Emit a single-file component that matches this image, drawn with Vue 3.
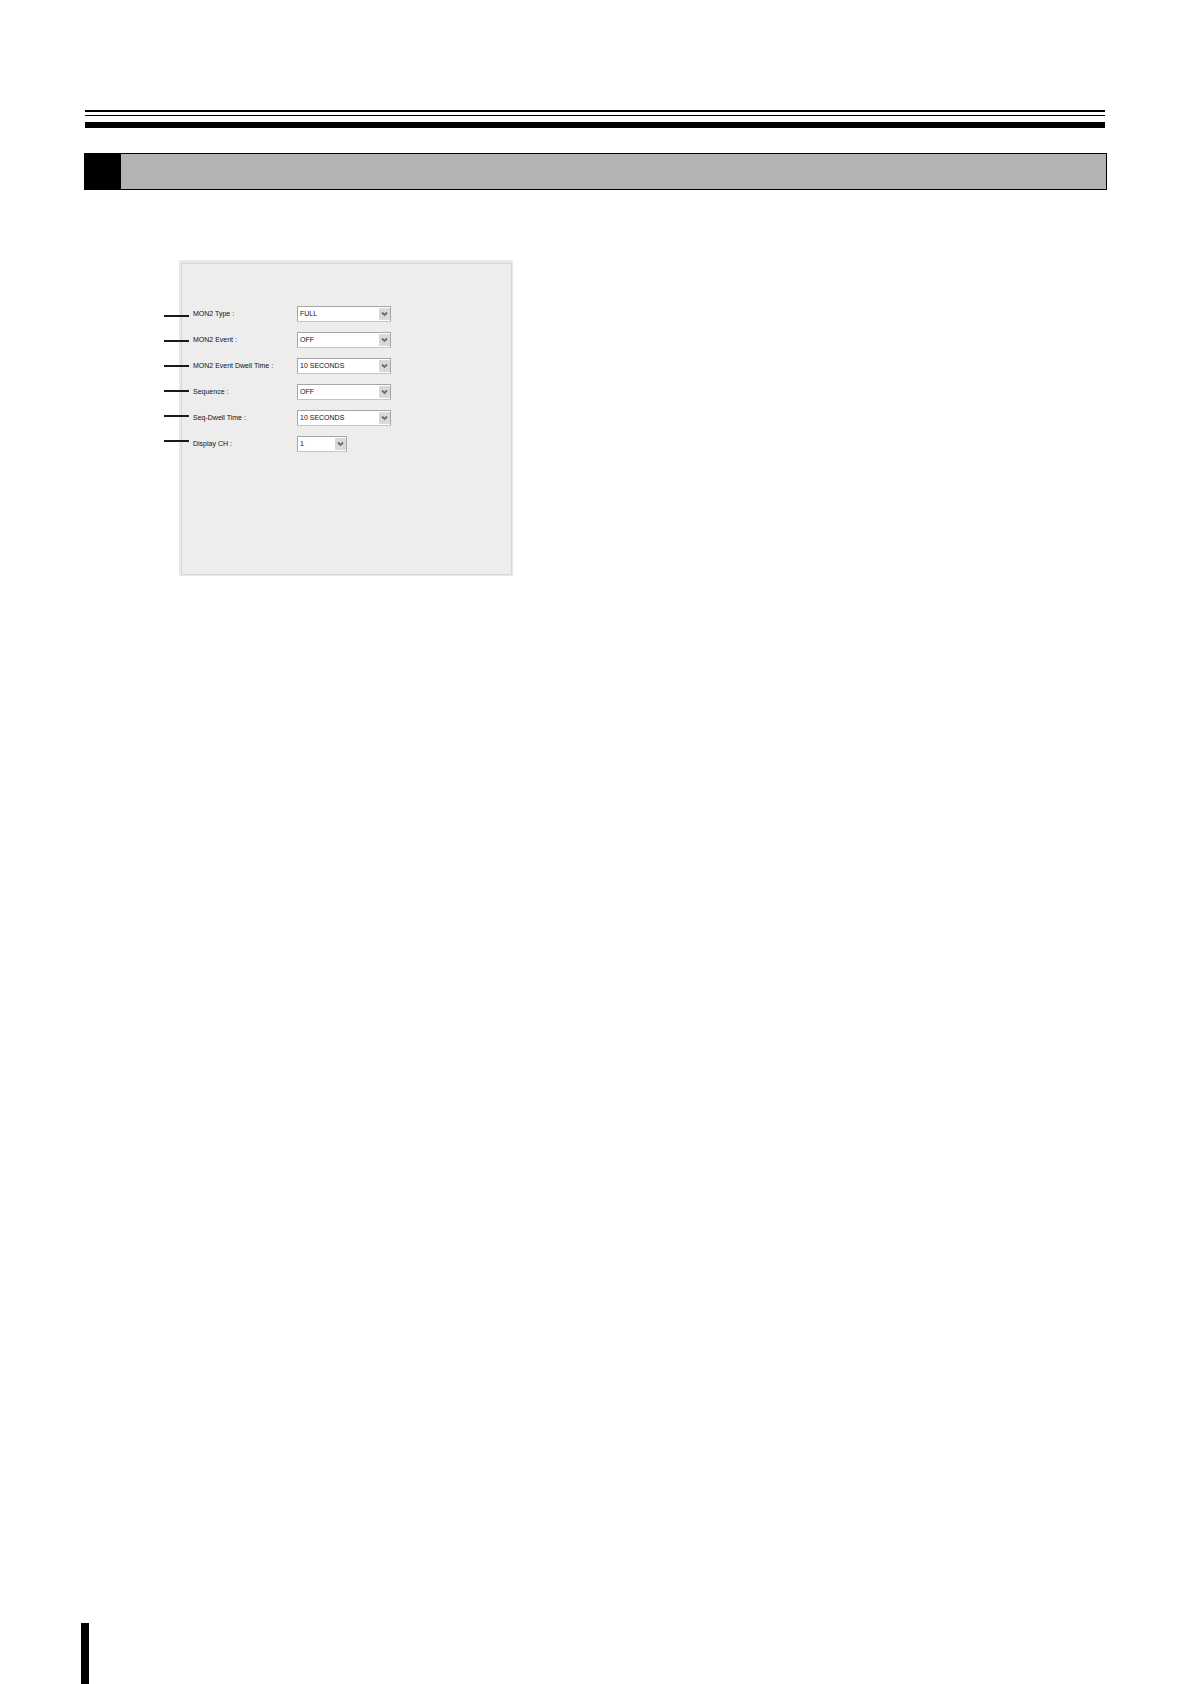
<script setup>
const fields = [
  { id: 'mon2-type', label: 'MON2 Type :', value: 'FULL', options: ['FULL'] },
  { id: 'mon2-event', label: 'MON2 Event :', value: 'OFF', options: ['OFF', 'ON'] },
  { id: 'mon2-dwell', label: 'MON2 Event Dwell Time :', value: '10 SECONDS', options: ['5 SECONDS', '10 SECONDS'] },
  { id: 'sequence', label: 'Sequence :', value: 'OFF', options: ['OFF', 'ON'] },
  { id: 'seq-dwell', label: 'Seq-Dwell Time :', value: '10 SECONDS', options: ['5 SECONDS', '10 SECONDS'] },
  { id: 'display-ch', label: 'Display CH :', value: '1', options: ['1', '2', '3', '4'], short: true },
]
</script>

<template>
  <div class="page">
    <header>
      <div class="rules">
        <div class="rule medium"></div>
        <div class="rule thin"></div>
        <div class="rule thick"></div>
      </div>
      <div class="title-bar">
        <div class="title-number"></div>
      </div>
    </header>

    <main>
      <form class="panel" @submit.prevent>
        <div class="panel-frame">
          <div v-for="f in fields" :key="f.id" class="row">
            <label :for="f.id">{{ f.label }}</label>
            <div class="select-box" :class="{ short: f.short }">
              <select :id="f.id" :value="f.value">
                <option v-for="o in f.options" :key="o" :value="o">{{ o }}</option>
              </select>
              <svg class="arrow" viewBox="0 0 11 12" aria-hidden="true">
                <rect width="11" height="12" rx="1" fill="#d9d9d9" />
                <path d="M3 4.5 L5.5 7 L8 4.5" fill="none" stroke="#6c6c6c" stroke-width="1.8" />
              </svg>
            </div>
          </div>
        </div>
        <div class="leaders" aria-hidden="true">
          <span v-for="f in fields" :key="f.id" class="leader"></span>
        </div>
      </form>
    </main>

    <footer>
      <div class="page-mark"></div>
    </footer>
  </div>
</template>

<style>
body {
  margin: 0;
  background: #fff;
}
</style>

<style scoped>
.page {
  box-sizing: border-box;
  min-height: 100vh;
  padding: 110px 83px 0 84px;
  display: flex;
  flex-direction: column;
  font-family: "Liberation Sans", Arial, sans-serif;
}

.rules {
  margin: 0 2px 0 1px;
}

.rule {
  background: #000;
}

.medium {
  height: 2px;
  margin-bottom: 3px;
}

.thin {
  height: 1px;
  margin-bottom: 6px;
}

.thick {
  height: 6px;
}

.title-bar {
  display: flex;
  margin-top: 25px;
  border: 1px solid #000;
  background: #b3b3b3;
}

.title-number {
  width: 36px;
  height: 35px;
  background: #000;
}

main {
  flex: 1;
  padding: 70px 0 0 95px;
}

.panel {
  position: relative;
  box-sizing: border-box;
  width: 334px;
  max-width: 100%;
  padding: 3px 1px 1px 2px;
  background: #e9e9e9;
}

.panel-frame {
  box-sizing: border-box;
  min-height: 312px;
  padding: 42px 10px 0 11px;
  display: flex;
  flex-direction: column;
  gap: 10px;
  border: 1px solid #d8d8d8;
  background: #ededed;
}

.row {
  display: flex;
  align-items: center;
  height: 16px;
}

label {
  width: 104px;
  font-size: 7px;
  line-height: 16px;
  color: #111;
  white-space: nowrap;
}

.select-box {
  position: relative;
  width: 94px;
  height: 16px;
}

.short {
  width: 50px;
}

select {
  appearance: none;
  display: block;
  box-sizing: border-box;
  width: 100%;
  height: 100%;
  margin: 0;
  padding: 0 14px 0 2px;
  border: 1px solid #a6a6a6;
  border-bottom-color: #c4c4c4;
  border-radius: 0;
  background: #fff;
  font-family: inherit;
  font-size: 7px;
  line-height: 14px;
  color: #111;
}

.arrow {
  position: absolute;
  top: 2px;
  right: 1px;
  width: 11px;
  height: 12px;
  pointer-events: none;
}

.leaders {
  position: absolute;
  top: 55px;
  left: -15px;
  width: 25px;
  height: 127px;
  display: flex;
  flex-direction: column;
  justify-content: space-between;
}

.leader {
  height: 2px;
  background: #1a1a1a;
}

.page-mark {
  width: 8px;
  height: 61px;
  margin-left: -3px;
  background: #000;
}
</style>
